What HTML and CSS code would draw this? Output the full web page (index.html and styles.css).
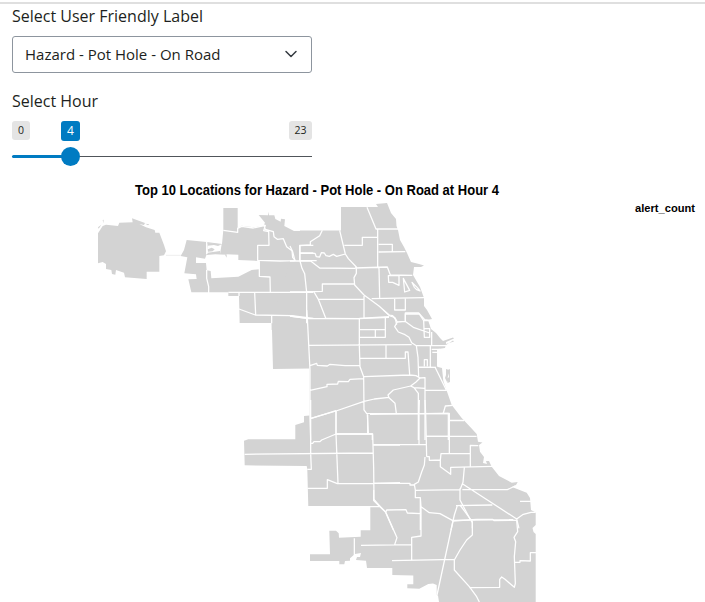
FILE: index.html
```html
<!DOCTYPE html>
<html lang="en">
<head>
<meta charset="utf-8">
<title>Top 10 Locations</title>
<link rel="stylesheet" href="styles.css">
</head>
<body>
<main class="panel">
  <label class="label">Select User Friendly Label</label>
  <div class="select">
    <span>Hazard - Pot Hole - On Road</span>
    <svg class="chevron" viewBox="0 0 16 16"><path d="M3 5.500l5 5 5-5"/></svg>
  </div>
  <label class="label label-hour">Select Hour</label>
  <div class="slider">
    <div class="marks"><span class="mark">0</span><span class="mark mark-max">23</span></div>
    <div class="track"></div>
    <div class="fill"></div>
    <div class="value">4</div>
    <div class="handle"></div>
  </div>
</main>
<svg class="chart" viewBox="0 176 705 426" width="705" height="426">
  <text class="title" x="135" y="195" textLength="364" lengthAdjust="spacingAndGlyphs">Top 10 Locations for Hazard - Pot Hole - On Road at Hour 4</text>
  <text class="legend" x="635" y="212" textLength="60" lengthAdjust="spacingAndGlyphs">alert_count</text>

  <g class="land">
    <!-- airport and north-west -->
    <g transform="translate(90 180) scale(.33333)">
      <path d="M24 160L38 138 48 134 84 138 88 128 128 127 126 115 165 129 162 135 148 132 168 142 194 150 196 158 208 158 222 195 228 214 222 226 208 228V275H170V297L105 292 102 278 78 270 76 284 66 282 64 270 48 267V252L38 246 24 250Z"/>
      <path d="M24 142L34 134 26 146ZM38 120L41 119 40 130ZM166 131L178 133 174 136Z"/>
      <path fill-rule="evenodd" d="M290 180L350 186 396 192 400 150V84H443V145L455 137 490 142 520 138 525 128 506 105 534 106 535 95 537 106 553 106 556 117 572 125 573 116 585 118 583 138 612 153H670V450H545V429H449L447 348H415V337H304L295 298 320 297 318 283 283 280 292 232 272 228 282 210ZM353 191L395 193 390 222 445 224V240L508 243V268L485 270 445 290 364 295 362 273 350 271 348 249H318V232L345 236 350 223Z"/>
      <path d="M353 190L395 193 384 198 372 195 353 197ZM353 208L365 203 374 208 368 214 354 215ZM353 218L390 213V222L410 223V233L405 224 376 223 350 225Z"/>
      <path class="wisp" d="M228 226H272"/>
    </g>
    <!-- main body -->
    <path d="M300 230.5H341V207H378L376 204 387 203 391 213 396 219 396.500 226 398 230 400 240 404 247 407 253 411 262 419 264 424 265.500 421 267 414 267 413 275 420 287 424 298 424 306 427 310 432 319 428 320 431 329 436 333 440 338 443 341 453 337.500 454 338.500 446 342V345L453 340.500 454 341.500 446 344 445 348 438 349V367L442 368 443.300 381 446.700 390.700 451.700 405 461.700 418 470 426.700 476.700 434 478 441.700 482.500 442.500 479 445 480 451.700 484 457 483 463 487 464 486 461 489 461 491.700 466.700 499 476 511.700 482.700 517.700 482 516 485 512 487 526.700 492.700 530 498 531 510 535.700 512.500V525L532.500 528 533.500 532 535.700 534V602H439L438 595.500 436.700 595V585L433 583.500 428.300 584 419.300 588.700 407.300 588.300V584.300H413.300V575.500L392.300 575V568H367L366 560.700 356 560 357 557 360 557 361 553 355 554 350 558.300V560.700L345 561 344.300 564.300H339.300V561H310V554.300H330L329.300 530.700H336L338.700 533.300 339 537.700 360.700 536.700V530.300H370.300V506.700H308.300L307.300 469.300 306.700 466 244.700 465.300 244 440.700 248.300 439.300H295.300V425L304 422.300V416L309.500 415.500V368.500L273 369 271.700 319Z"/>
    <path d="M446 369L449 370 447 382 445 378 446 375ZM448 370L450 369V382L447.500 383 447 379 449 377Z"/>
  </g>

  <g class="borders">
    <g transform="translate(90 180) scale(.33333)">
      <path d="M350 186V222M350 270V295L356 320V340M400 151L443 157V145L455 139 490 144 526 136 521 152 536 155 537 196H503V241L570 243 614 242M520 130L526 148 550 155 552 170 562 178 580 176 590 200 606 212 608 232 616 242M508 242V289L540 291 541 337M415 337H670M447 338V348M447 387L496 405 605 407 670 415M494 338L497 405M545 408V430M670 196H629V242H680M629 219H670"/>
    </g>
    <g transform="translate(290 195) scale(.33333)">
      <path d="M0 153L8 170 15 198M0 198H62L89 219 195 220M97 106L89 122 61 140V150L30 152V198L36 220 44 236 50 292V385M30 175H75L79 185 89 186 94 173 103 174 108 182 118 184 130 178 140 184 166 177M149 106L166 177 175 191 199 216V235L192 248 194 270 222 300 267 333 297 360 308 362 317 375 320 389M163 151H217V127H263M231 37L258 102H326M263 102V216L267 220 269 308M266 148H307V169M266 171L346 170M195 219L292 216 301 240 367 241M295 242H327V271L308 262H296ZM340 250L359 286 344 291ZM366 262L382 278 390 288 380 284 373 277ZM0 291L97 289V267H194M72 291L85 313 107 369M85 313H222M222 303V370M245 311L402 308M314 311V345H346V311M0 363L50 370 205 371 297 367M346 377V354H386L404 374 425 377"/>
    </g>
    <g transform="translate(290 310) scale(.33333)">
      <path d="M50 0L52 24 60 180V325L62 390M0 18L52 25M107 25L208 26M208 26V108L210 170 221 200 222 300 233 315V370M210 59H286M208 82H286V22M256 59V81M208 25L297 20M280 0L300 18 314 22 322 36 314 50 325 66 345 74 357 82 365 98 379 107 384 142 386 202M322 36L345 34 370 52 419 69M346 34V12H388L401 32 403 82H419V56H403M425 66V107M401 32H418M55 106L365 104M379 107H468M288 106V145M210 145H346V126H354L359 194M421 107V170M385 171L438 172M425 118H450M427 127H443M443 120V170M403 169V149H412V169M60 167L80 160 82 166 112 168 120 163 165 167 210 166M60 241L111 230V223L143 222 145 214 175 215 180 208 221 206M222 200L359 195 378 197 390 204 405 203V235L372 233 362 228 378 216 390 204M362 228L310 240 294 255 297 263 315 280 319 310M62 325L138 303 222 274 253 267 297 262M138 303V372H247V390M228 310L385 311 475 310V390M372 233L385 250V390M405 235V390M436 173L470 242M405 241H468M460 309L466 288 488 286M479 331H520M410 379H475"/>
    </g>
    <g transform="translate(230 400) scale(.33333)">
      <path d="M242 0V160L244 208H232M242 56L318 32M412 44L415 99M318 32V102L324 250M244 130H248L252 125H270L275 120 318 102H428L431 205 432 298M44 163L428 159M431 135H510M232 265H292V239L322 251 432 250 510 248M432 298L450 320"/>
    </g>
    <g transform="translate(370 400) scale(.33333)">
      <path d="M0 43L238 40V160M148 0L147 40 147 132M165 0L167 42 170 170M10 134H170M238 62H282M170 109H320M170 170H178V181L211 180 213 161 301 160V199M301 159V136L325 137M211 180V200L242 223V202L368 199M165 171L163 195 155 216 145 246 133 253 136 270V293H151L153 320 178 338 210 341 247 361 430 359M10 250H120V255H133M136 271L270 269 279 247 283 203M277 251L440 357M270 265V300L300 357 307 368V385M277 269H412L435 258 455 266M258 317L367 315M262 317L253 345 243 390M450 304H484M10 298L46 335 70 390M48 335L50 330 108 329 112 339 153 341M151 293V390M440 357L447 385M497 337H483L460 343 440 357"/>
    </g>
    <g transform="translate(300 490) scale(.33333)">
      <path d="M221 0V32L258 68 291 143 284 164M0 50H238M163 145V200M183 166L334 164M363 50V138L335 142V210M276 212L465 208M459 93L411 315M480 45L517 95V135L500 150 480 180 463 210V240L508 290 530 320 538 336M459 93L530 88 578 88 582 92 650 91 653 125 642 142 647 155 643 200 646 280 643 292 615 268 605 261 599 268V292L508 293M643 217H660V212L691 213V188H709"/>
    </g>
  </g>
</svg>
</body>
</html>
```
FILE: styles.css
```css
body {
  margin: 0;
  padding-top: 2px;
  width: 705px;
  height: 600px;
  overflow: hidden;
  background: #fff;
  color: #1d1f21;
  font-family: "Open Sans", "Noto Sans", sans-serif;
}
.panel {
  box-sizing: border-box;
  height: 174px;
  padding: 2px 12px 0;
  border-top: 2px solid #dfdfdf;
}
.label {
  display: block;
  height: 24px;
  margin-top: -2px;
  margin-bottom: 8px;
  font-size: 16px;
  line-height: 24px;
}
.select {
  box-sizing: border-box;
  display: flex;
  align-items: center;
  justify-content: space-between;
  width: 300px;
  height: 37px;
  padding: 0 12px 2px;
  border: 1px solid #8d959e;
  border-radius: 3px;
  font-size: 15px;
}
.chevron {
  width: 16px;
  height: 16px;
}
.chevron path {
  fill: none;
  stroke: #343a40;
  stroke-width: 1.5;
  stroke-linecap: round;
  stroke-linejoin: round;
}
.label-hour { margin-top: 16px; }
.slider {
  position: relative;
  width: 300px;
  height: 46px;
}
.marks {
  display: flex;
  justify-content: space-between;
}
.mark {
  height: 19px;
  padding: 0 6px;
  border-radius: 3px;
  background: #e4e4e4;
  font-size: 10.5px;
  line-height: 19px;
}
.mark-max { padding: 0 5.5px; }
.track, .fill, .value, .handle { position: absolute; }
.track {
  top: 35px;
  width: 300px;
  height: 1px;
  background: #50555a;
}
.fill {
  top: 34px;
  width: 58px;
  height: 3px;
  border-radius: 2px;
  background: #007bc2;
}
.value {
  top: 0;
  left: 49px;
  width: 19px;
  height: 20px;
  border-radius: 3px;
  background: #007bc2;
  color: #fff;
  font-size: 12px;
  font-weight: 500;
  line-height: 20px;
  text-align: center;
}
.handle {
  top: 26px;
  left: 49px;
  width: 19px;
  height: 19px;
  border-radius: 50%;
  background: #007bc2;
}
.chart { display: block; }
.title, .legend {
  fill: #000;
  font-family: "Liberation Sans", Arial, sans-serif;
  font-weight: bold;
}
.title { font-size: 14px; }
.legend { font-size: 11px; }
.land { fill: #d3d3d3; }
.wisp { stroke: #e6e6e6; stroke-width: 2; }
.borders {
  fill: none;
  stroke: #fff;
  stroke-width: 3.8;
  stroke-linejoin: round;
}
```
